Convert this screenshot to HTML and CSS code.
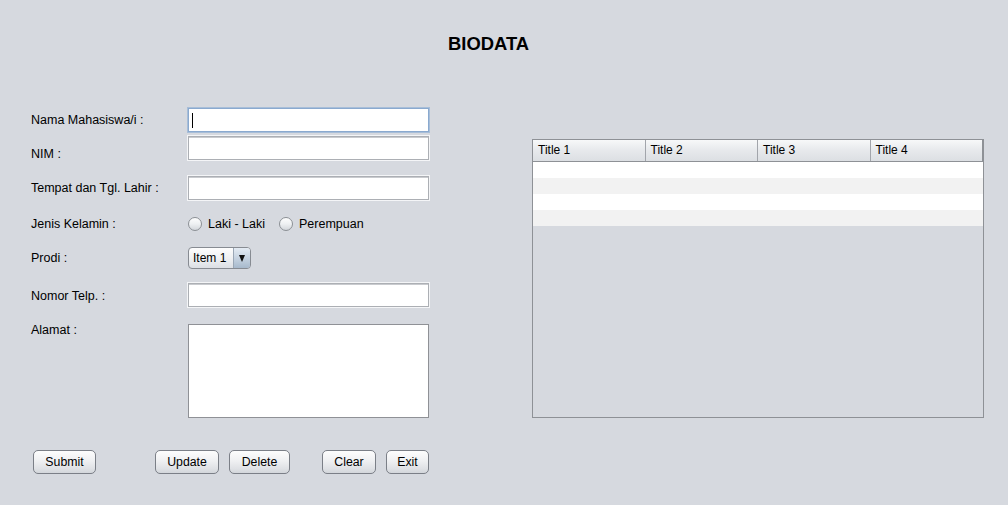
FILE: index.html
```html
<!DOCTYPE html>
<html>
<head>
<meta charset="utf-8">
<link rel="stylesheet" href="styles.css">
</head>
<body>
<div class="window">
  <h1 class="title">BIODATA</h1>
  <div class="main">
    <div class="form">
      <div class="row row-nama">
        <span class="label">Nama Mahasiswa/i :</span>
        <div class="field focused"><span class="caret"></span></div>
      </div>
      <div class="row row-nim">
        <span class="label">NIM :</span>
        <div class="field"></div>
      </div>
      <div class="row row-ttl">
        <span class="label">Tempat dan Tgl. Lahir :</span>
        <div class="field"></div>
      </div>
      <div class="row row-jk">
        <span class="label">Jenis Kelamin :</span>
        <div class="radios">
          <span class="radio"><span class="dot"></span>Laki - Laki</span>
          <span class="radio"><span class="dot"></span>Perempuan</span>
        </div>
      </div>
      <div class="row row-prodi">
        <span class="label">Prodi :</span>
        <div class="combo"><span class="combo-text">Item 1</span><span class="combo-btn"><span class="arrow"></span></span></div>
      </div>
      <div class="row row-telp">
        <span class="label">Nomor Telp. :</span>
        <div class="field"></div>
      </div>
      <div class="row row-alamat">
        <span class="label">Alamat :</span>
        <div class="textarea"></div>
      </div>
      <div class="buttons">
        <button class="btn btn-submit">Submit</button>
        <button class="btn btn-update">Update</button>
        <button class="btn btn-delete">Delete</button>
        <button class="btn btn-clear">Clear</button>
        <button class="btn btn-exit">Exit</button>
      </div>
    </div>
    <div class="table">
      <div class="thead">
        <div class="th">Title 1</div>
        <div class="th">Title 2</div>
        <div class="th">Title 3</div>
        <div class="th">Title 4</div>
      </div>
      <div class="tr"></div>
      <div class="tr alt"></div>
      <div class="tr"></div>
      <div class="tr alt"></div>
    </div>
  </div>
</div>
</body>
</html>
```
FILE: styles.css
```css
html, body {
  margin: 0;
  padding: 0;
}
body {
  width: 1008px;
  height: 505px;
  overflow: hidden;
  background: #d6d9df;
  font-family: "Liberation Sans", Arial, sans-serif;
  font-size: 12px;
  color: #000;
}
.window {
  padding-top: 33px;
}
.title {
  margin: 0;
  padding-left: 448px;
  font-size: 18.4px;
  line-height: 22px;
  font-weight: bold;
}
.main {
  display: flex;
  align-items: flex-start;
  margin-top: 52px;
}
.form {
  display: flex;
  flex-direction: column;
  padding-left: 31px;
  width: 399px;
}
.row {
  display: flex;
  align-items: flex-start;
}
.label {
  width: 156px;
  flex: none;
  font-size: 12.5px;
  line-height: 14px;
  white-space: nowrap;
}
.row-nama .label { margin-top: 6px; }
.row-nim { margin-top: 2px; }
.row-nim .label { margin-top: 12px; }
.row-ttl { margin-top: 14px; }
.row-ttl .label { margin-top: 6px; }
.row-jk { margin-top: 16px; align-items: center; height: 14px; }
.row-prodi { margin-top: 16px; align-items: center; height: 22px; }
.row-prodi .label { margin-top: -1px; }
.row-telp { margin-top: 13px; }
.row-telp .label { margin-top: 7px; }
.row-alamat { margin-top: 15px; }

.field {
  box-sizing: border-box;
  width: 243px;
  height: 26px;
  background: #fff;
  border: 1px solid #f4f5f7;
  box-shadow: inset 0 0 0 1px #acafb4, inset 0 2px 0 0 #c9cbcf;
  display: flex;
  align-items: center;
  padding-left: 4px;
}
.field.focused {
  border: 1px solid #a8bed8;
  box-shadow: inset 0 0 0 1px #8aa9cf;
}
.caret {
  width: 1px;
  height: 15px;
  background: #000;
}
.textarea {
  box-sizing: border-box;
  margin-top: 1px;
  margin-left: 1px;
  width: 241px;
  height: 94px;
  background: #fff;
  border: 1px solid #8f9196;
}

.radios {
  display: flex;
  align-items: center;
  margin-left: 1px;
  font-size: 12.5px;
}
.radio {
  display: flex;
  align-items: center;
  line-height: 14px;
  margin-right: 14px;
}
.dot {
  box-sizing: border-box;
  width: 14px;
  height: 14px;
  border-radius: 50%;
  border: 1px solid #8c9095;
  background: linear-gradient(to bottom, #fdfdfd 0%, #eef0f2 50%, #d3d6db 100%);
  margin-right: 6px;
}

.combo {
  box-sizing: border-box;
  display: flex;
  margin-left: 1px;
  width: 63px;
  height: 22px;
  border: 1px solid #878b92;
  border-radius: 4px;
  overflow: hidden;
  background: linear-gradient(to bottom, #fdfdfd 0%, #eff1f3 50%, #dcdfe4 100%);
}
.combo-text {
  flex: 1;
  padding-left: 4px;
  line-height: 20px;
}
.combo-btn {
  width: 16px;
  display: flex;
  align-items: center;
  justify-content: center;
  border-left: 1px solid #9aa7b6;
  background: linear-gradient(to bottom, #e4ebf3 0%, #c6d3e1 50%, #a7b9cc 100%);
}
.arrow {
  width: 0;
  height: 0;
  border-left: 3.5px solid transparent;
  border-right: 3.5px solid transparent;
  border-top: 7px solid #111;
}

.buttons {
  display: flex;
  margin-top: 32px;
  margin-left: 2px;
}
.btn {
  box-sizing: border-box;
  height: 24px;
  padding: 0;
  border: 1px solid #7b7f87;
  border-radius: 5px;
  background: linear-gradient(to bottom, #fdfdfd 0%, #eff0f2 45%, #dfe1e5 80%, #d3d6db 100%);
  font-family: "Liberation Sans", Arial, sans-serif;
  font-size: 12.3px;
  color: #000;
  text-align: center;
}
.btn-submit { width: 63px; }
.btn-update { width: 64px; margin-left: 59px; }
.btn-delete { width: 61px; margin-left: 10px; }
.btn-clear { width: 54px; margin-left: 32px; }
.btn-exit { width: 43px; margin-left: 10px; }

.table {
  box-sizing: border-box;
  margin-left: 102px;
  margin-top: 32px;
  width: 452px;
  height: 279px;
  border: 1px solid #8e9196;
  background: #d6d9df;
}
.thead {
  display: grid;
  grid-template-columns: repeat(4, 1fr);
  height: 22px;
  box-sizing: border-box;
  border-bottom: 1px solid #8e9196;
  background: linear-gradient(to bottom, #f7f8f9 0%, #e8eaed 45%, #dcdfe3 100%);
}
.th {
  padding-left: 5px;
  line-height: 21px;
  border-right: 1px solid #a2a5ab;
}
.th:last-child {
  border-right: 1px solid #8e9196;
}
.tr {
  height: 16px;
  background: #fff;
}
.tr.alt {
  background: #f2f2f2;
}
```
